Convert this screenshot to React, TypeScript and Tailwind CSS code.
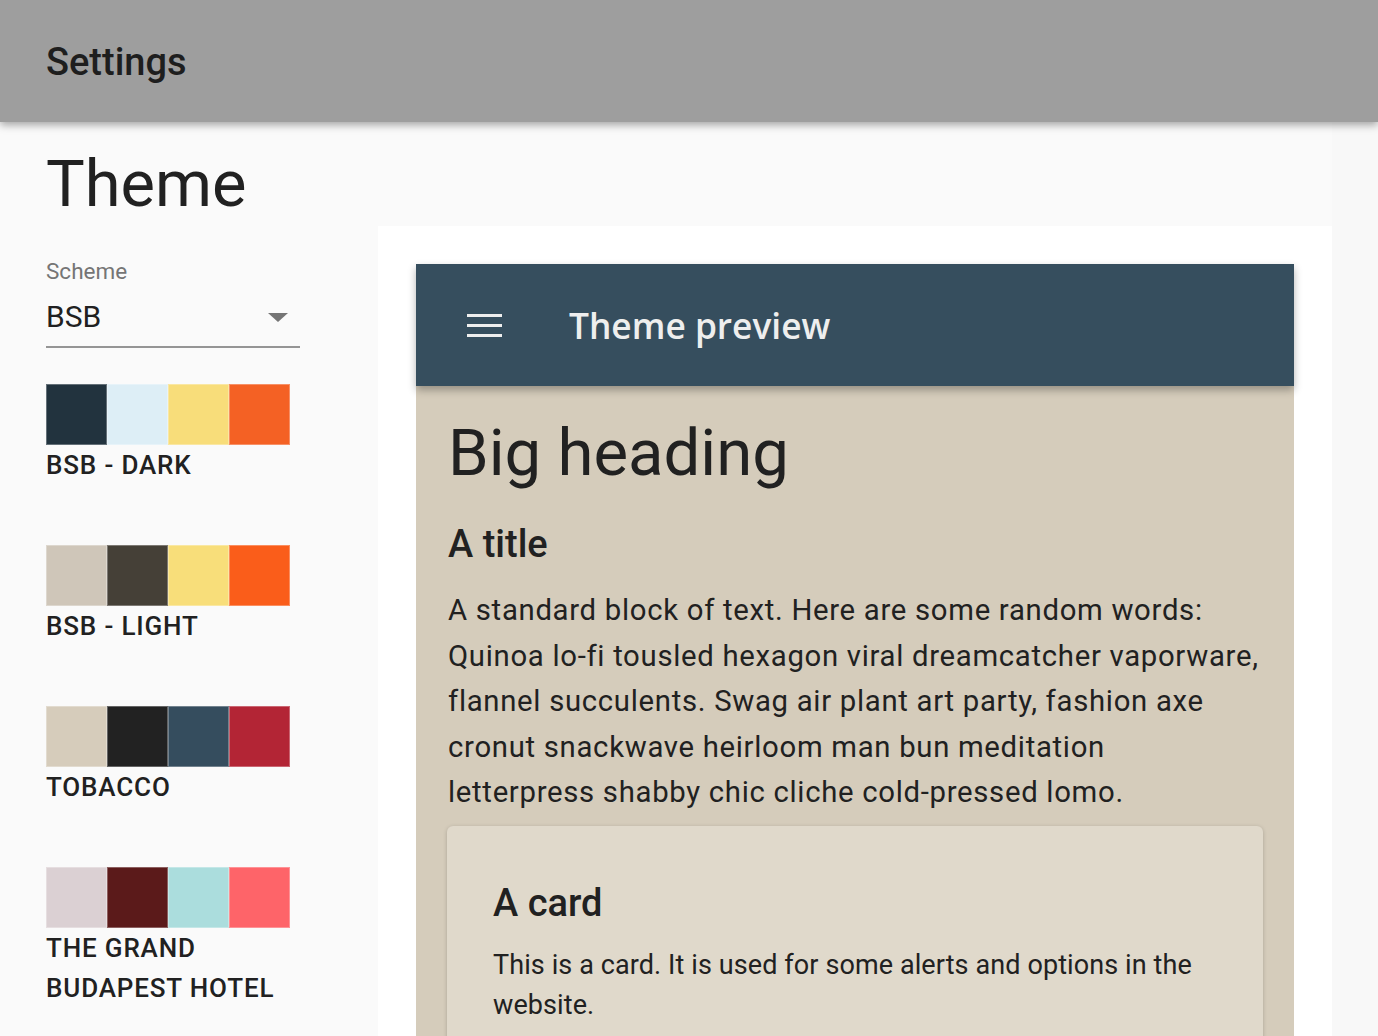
import React from 'react';

type Scheme = { name: string; colors: string[] };

const SCHEMES: Scheme[] = [
  { name: 'BSB - Dark', colors: ['#22333e', '#ddeef6', '#f8dd7a', '#f46124'] },
  { name: 'BSB - Light', colors: ['#cfc6b9', '#454037', '#f8de7a', '#fa5d1a'] },
  { name: 'Tobacco', colors: ['#d6ccbb', '#222222', '#354d5e', '#b32535'] },
  { name: 'The Grand Budapest Hotel', colors: ['#dbd0d3', '#5b1a1a', '#abdddd', '#fe6469'] },
];

const LINES = [
  'A standard block of text. Here are some random words:',
  'Quinoa lo-fi tousled hexagon viral dreamcatcher vaporware,',
  'flannel succulents. Swag air plant art party, fashion axe',
  'cronut snackwave heirloom man bun meditation',
  'letterpress shabby chic cliche cold-pressed lomo.',
];

function Swatch({ scheme }: { scheme: Scheme }) {
  return (
    <div className="mb-[60px]">
      <div className="flex h-[61px] w-[244px]">
        {scheme.colors.map((c) => (
          <div
            key={c}
            className="h-full flex-1 border border-white/30"
            style={{ backgroundColor: c }}
          />
        ))}
      </div>
      <p className="w-[254px] text-[26px] leading-[40px] font-medium uppercase tracking-[0.85px] text-[#212121]">
        {scheme.name}
      </p>
    </div>
  );
}

function Sidebar() {
  return (
    <aside className="w-[378px] shrink-0 pl-[46px]">
      <h1 className="mt-[30px] text-[65px] leading-[64px] text-[#212121]">Theme</h1>

      <label className="mt-[43px] block text-[22.5px] leading-[24px] text-[#757575]">Scheme</label>
      <div className="w-[254px]">
        <div className="mt-[19px] flex items-center justify-between pb-[14px] pr-[12px]">
          <span className="text-[30px] leading-[30px] text-[#212121]">BSB</span>
          <span className="h-0 w-0 border-x-[10px] border-t-[9px] border-x-transparent border-t-[#757575]" />
        </div>
        <div className="h-[2px] bg-[#959595]" />
      </div>

      <div className="mt-[36px]">
        {SCHEMES.map((s) => (
          <Swatch key={s.name} scheme={s} />
        ))}
      </div>
    </aside>
  );
}

function Preview() {
  return (
    <section className="mt-[104px] flex-1 bg-white px-[38px] pt-[38px]">
      <div className="relative z-10 flex h-[122px] items-center bg-[#364e5e] pl-[51px] shadow-[0_4px_8px_rgba(0,0,0,0.3)]">
        <div className="flex w-[35px] flex-col gap-[7px]">
          <span className="h-[3px] bg-[#eeeeee]" />
          <span className="h-[3px] bg-[#eeeeee]" />
          <span className="h-[3px] bg-[#eeeeee]" />
        </div>
        <h2 className="ml-[67px] font-['Open_Sans',sans-serif] text-[35.3px] font-semibold text-[#eeeeee]">
          Theme preview
        </h2>
      </div>

      <div className="bg-[#d5ccbb] px-[32px] pb-[40px] text-[#212121]">
        <h1 className="pt-[35px] text-[65.3px] leading-[64px]">Big heading</h1>
        <h3 className="mt-[37px] text-[38px] leading-[44px] font-medium">A title</h3>
        <p className="mt-[22px] text-[29.3px] leading-[45.5px] tracking-[0.7px]">
          {LINES.map((l, i) => (
            <React.Fragment key={i}>
              {l}
              {i < LINES.length - 1 && <br />}
            </React.Fragment>
          ))}
        </p>

        <div className="-mx-px mt-[10px] rounded-md bg-[#e0d9cb] px-[46px] pt-[54px] pb-[40px] shadow-[0_1px_4px_rgba(0,0,0,0.2)]">
          <h3 className="text-[38px] leading-[46px] font-medium">A card</h3>
          <p className="mt-[19px] text-[27px] leading-[40px] tracking-[0.1px]">
            This is a card. It is used for some alerts and options in the website.
          </p>
        </div>
      </div>
    </section>
  );
}

export default function App() {
  return (
    <div className="min-h-screen overflow-hidden bg-[#f8f8f8] font-['Roboto',sans-serif]">
      <header className="relative z-20 flex h-[122px] w-full items-center bg-[#9e9e9e] pl-[46px] pt-[3px] shadow-[0_3px_8px_rgba(0,0,0,0.35)]">
        <span className="text-[38px] font-medium text-[#1e1e1e]">Settings</span>
      </header>
      <main className="flex w-[1332px] bg-[#fafafa]">
        <Sidebar />
        <Preview />
      </main>
    </div>
  );
}
